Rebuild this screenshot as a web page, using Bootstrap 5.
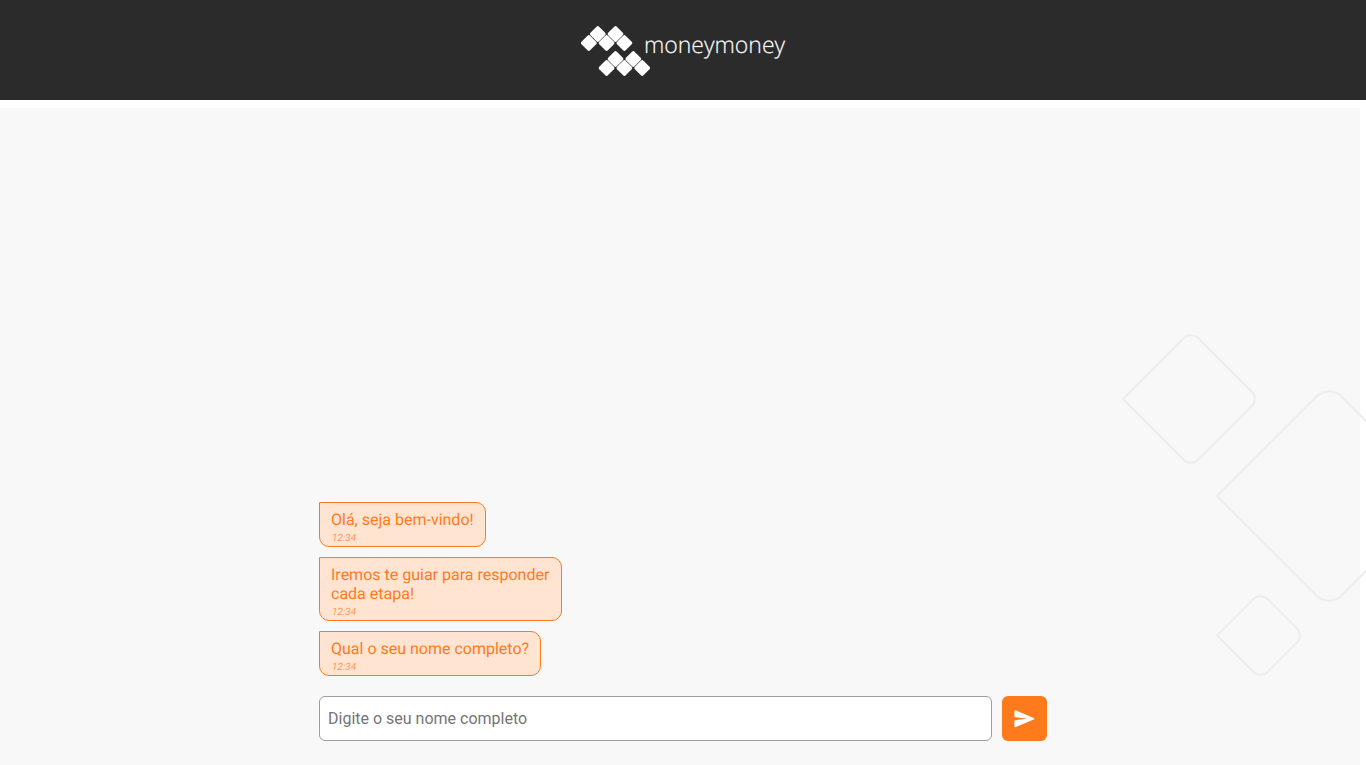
<!DOCTYPE html>
<html lang="pt-BR">
<head>
<meta charset="utf-8">
<meta name="viewport" content="width=device-width, initial-scale=1">
<title>moneymoney</title>
<link href="https://cdn.jsdelivr.net/npm/bootstrap@5.3.0/dist/css/bootstrap.min.css" rel="stylesheet">
<style>
  body { font-family: Roboto, sans-serif; background: #fff; text-rendering: geometricPrecision; }
  .topbar { height: 100px; padding-top: 2px; background: #2b2b2b; }
  .brand-link { color: #fff; }
  .brand-name { font: 300 23px/32px "Open Sans", sans-serif; margin: 3px 0 0 -7px; -webkit-text-stroke: thin #ffffff66; }
  .chat-area {
    background: linear-gradient(#f8f8f8, #f8f8f8) left bottom / calc(100% - 6px) calc(100% - 8px) no-repeat;
    padding: 24px 16px;
  }
  .shapes { right: 0; bottom: 85px; }
  .chat-column { max-width: 728px; }
  .messages { gap: 10px; margin-bottom: 20px; }
  .bubble {
    max-width: 243px; padding: 7px 11px 1px;
    color: #ff7a1d; background: #ffe4d2;
    border: 1px solid #ff7a1d; border-radius: 0 10px 10px 10px;
    font-size: 16px; line-height: 19px;
  }
  .bubble time { padding-left: 1px; margin-top: 4px; font-size: 10px; line-height: 12px; font-style: italic; opacity: .7; }
  .composer { gap: 10px; }
  .composer .form-control { height: 45px; padding: 0 8px; border-color: #9e9e9e; border-radius: 6px; }
  .composer .form-control::placeholder { color: #757575; }
  .send { width: 45px; height: 45px; background: #ff7a1d; border-radius: 6px; }
  .send:hover { background: #e96b12; }
</style>
</head>
<body>
<div class="d-flex flex-column min-vh-100">
  <header class="topbar d-flex justify-content-center align-items-center">
    <a href="#" class="brand-link d-flex align-items-start text-decoration-none" aria-label="moneymoney">
      <svg width="70" height="52" viewBox="0 0 70 52" fill="#fff" aria-hidden="true">
        <defs><rect id="gem" x="-6.1" y="-6.1" width="12.2" height="12.2" rx="1.8" transform="rotate(45)"/></defs>
        <use href="#gem" transform="translate(16.8 9)"/>
        <use href="#gem" transform="translate(34.5 9)"/>
        <use href="#gem" transform="translate(7.8 18)"/>
        <use href="#gem" transform="translate(25.6 18)"/>
        <use href="#gem" transform="translate(43.4 18)"/>
        <use href="#gem" transform="translate(34.5 34)"/>
        <use href="#gem" transform="translate(52.3 34)"/>
        <use href="#gem" transform="translate(25.6 43)"/>
        <use href="#gem" transform="translate(43.4 43)"/>
        <use href="#gem" transform="translate(61.2 43)"/>
      </svg>
      <span class="brand-name">moneymoney</span>
    </a>
  </header>
  <main class="chat-area flex-grow-1 d-flex flex-column justify-content-end position-relative overflow-hidden">
    <svg class="shapes position-absolute pe-none" width="246" height="350" viewBox="0 0 246 350" fill="none" stroke="#ededed" stroke-width="2" aria-hidden="true">
      <path d="M3 69 64 8A10 10 0 0 1 78 8L132 62A10 10 0 0 1 132 76L78 130A10 10 0 0 1 64 130Z"/>
      <path d="M97 166 196 67A18 18 0 0 1 222 67L308 153A18 18 0 0 1 308 179L222 265A18 18 0 0 1 196 265Z"/>
      <path d="M97 305.500 133.500 269A10 10 0 0 1 147.500 269L177 298.500A10 10 0 0 1 177 312.500L147.500 342A10 10 0 0 1 133.500 342Z"/>
    </svg>
    <div class="chat-column w-100 mx-auto position-relative">
      <div class="messages d-flex flex-column align-items-start">
        <div class="bubble">Olá, seja bem-vindo!<time class="d-block">12:34</time></div>
        <div class="bubble">Iremos te guiar para responder cada etapa!<time class="d-block">12:34</time></div>
        <div class="bubble">Qual o seu nome completo?<time class="d-block">12:34</time></div>
      </div>
      <form class="composer d-flex">
        <input type="text" class="form-control" placeholder="Digite o seu nome completo" aria-label="Digite o seu nome completo">
        <button type="button" class="send btn border-0 p-0 flex-shrink-0 d-flex align-items-center justify-content-center" aria-label="Enviar">
          <svg width="24" height="24" viewBox="0 0 24 24" fill="#fff" aria-hidden="true"><path d="M2.800 20 20.700 12.400Q21.900 11.700 20.700 11L2.800 3.300Q1.400 2.900 1.400 4.200V9.300Q1.400 10 2.200 10.200L14.500 11.700 2.200 13.200Q1.400 13.400 1.400 14.200V19.100Q1.400 20.500 2.800 20Z"/></svg>
        </button>
      </form>
    </div>
  </main>
</div>
<script src="https://cdn.jsdelivr.net/npm/bootstrap@5.3.0/dist/js/bootstrap.bundle.min.js"></script>
</body>
</html>
